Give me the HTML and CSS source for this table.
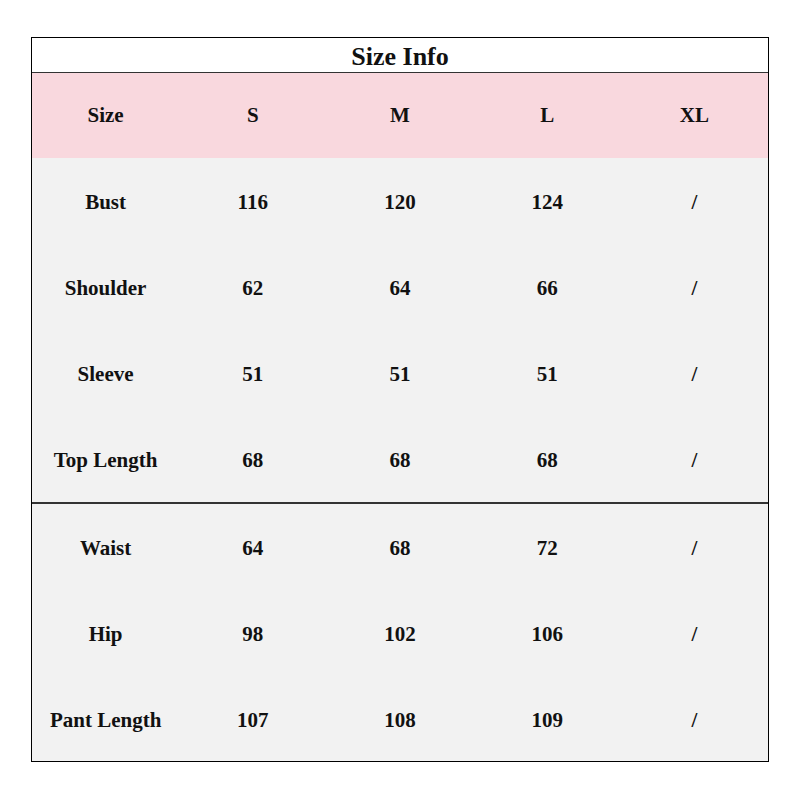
FILE: index.html
```html
<!DOCTYPE html>
<html>
<head>
<meta charset="utf-8">
<link rel="stylesheet" href="styles.css">
</head>
<body>
<div class="chart">
  <div class="title">Size Info</div>
  <div class="row head">
    <div>Size</div><div>S</div><div>M</div><div>L</div><div>XL</div>
  </div>
  <div class="group">
    <div class="row"><div>Bust</div><div>116</div><div>120</div><div>124</div><div>/</div></div>
    <div class="row"><div>Shoulder</div><div>62</div><div>64</div><div>66</div><div>/</div></div>
    <div class="row"><div>Sleeve</div><div>51</div><div>51</div><div>51</div><div>/</div></div>
    <div class="row"><div>Top Length</div><div>68</div><div>68</div><div>68</div><div>/</div></div>
  </div>
  <div class="group second">
    <div class="row"><div>Waist</div><div>64</div><div>68</div><div>72</div><div>/</div></div>
    <div class="row"><div>Hip</div><div>98</div><div>102</div><div>106</div><div>/</div></div>
    <div class="row"><div>Pant Length</div><div>107</div><div>108</div><div>109</div><div>/</div></div>
  </div>
</div>
</body>
</html>
```
FILE: styles.css
```css
html, body {
  margin: 0;
  padding: 0;
  background: #fff;
}
body {
  font-family: "Liberation Serif", "Times New Roman", serif;
  font-weight: bold;
  color: #111;
}
.chart {
  margin: 37px 0 0 31px;
  width: 738px;
  box-sizing: border-box;
  border: 1px solid #000;
  background: #f2f2f2;
}
.title {
  height: 34px;
  line-height: 38px;
  text-align: center;
  font-size: 26px;
  background: #fff;
  border-bottom: 1px solid #333;
}
.row {
  display: grid;
  grid-template-columns: repeat(5, 1fr);
  height: 86px;
  box-sizing: border-box;
  padding-top: 3px;
  align-items: center;
  font-size: 21px;
}
.row > div {
  text-align: center;
}
.head {
  height: 85px;
  padding-top: 0;
  background: #f9d8de;
}
.second {
  border-top: 2px solid #333;
}
.second .row:last-child {
  height: 85px;
}
```
